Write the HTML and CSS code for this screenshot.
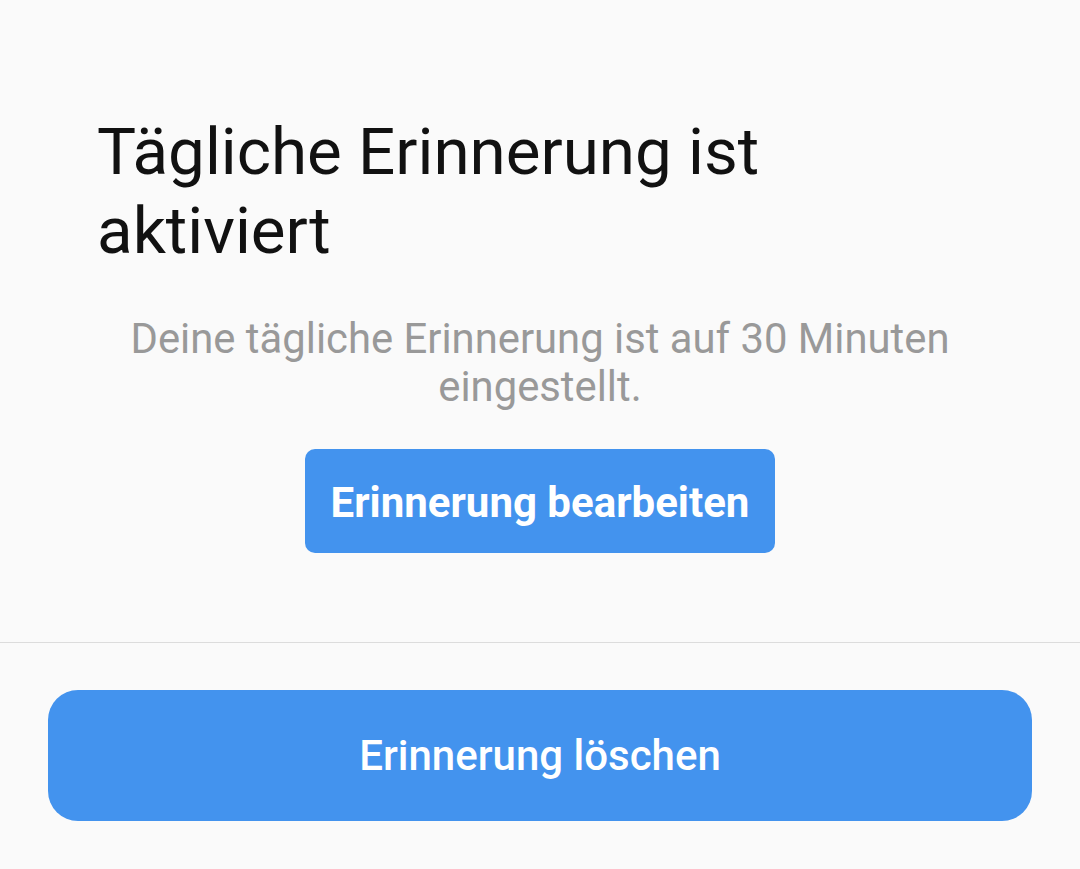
FILE: index.html
```html
<!DOCTYPE html>
<html lang="de">
<head>
<meta charset="utf-8">
<link rel="stylesheet" href="styles.css">
</head>
<body>
<div class="page">
  <section class="content">
    <h1 class="title">Tägliche Erinnerung ist aktiviert</h1>
    <p class="desc">Deine tägliche Erinnerung ist auf 30 Minuten eingestellt.</p>
    <button class="edit-btn">Erinnerung bearbeiten</button>
  </section>
  <footer class="footer">
    <button class="delete-btn">Erinnerung löschen</button>
  </footer>
</div>
</body>
</html>
```
FILE: styles.css
```css
html, body {
  margin: 0;
  padding: 0;
  background: #fafafa;
  font-family: Roboto, "Liberation Sans", sans-serif;
}
.page {
  width: 1080px;
  height: 869px;
  display: flex;
  flex-direction: column;
}
.content {
  height: 643px;
  box-sizing: border-box;
  padding: 112px 97px 0;
  display: flex;
  flex-direction: column;
  align-items: center;
  border-bottom: 1px solid #dcdcdc;
}
.title {
  align-self: stretch;
  margin: 0;
  font-size: 65.5px;
  line-height: 79px;
  font-weight: 400;
  color: #111;
  padding-right: 150px;
}
.desc {
  margin: 45px 0 0;
  font-size: 41.8px;
  line-height: 48px;
  color: #999;
  text-align: center;
  padding: 0 20px;
}
.edit-btn {
  margin-top: 38px;
  width: 470px;
  height: 104px;
  padding-top: 4px;
  border: none;
  border-radius: 10px;
  background: #4393ee;
  color: #fff;
  font-family: Roboto, "Liberation Sans", sans-serif;
  font-weight: 700;
  font-size: 42px;
}
.footer {
  padding: 47px 48px 0;
}
.delete-btn {
  width: 984px;
  height: 131px;
  border: none;
  border-radius: 30px;
  background: #4393ee;
  color: #fff;
  font-family: Roboto, "Liberation Sans", sans-serif;
  font-weight: 500;
  font-size: 42px;
}
```
